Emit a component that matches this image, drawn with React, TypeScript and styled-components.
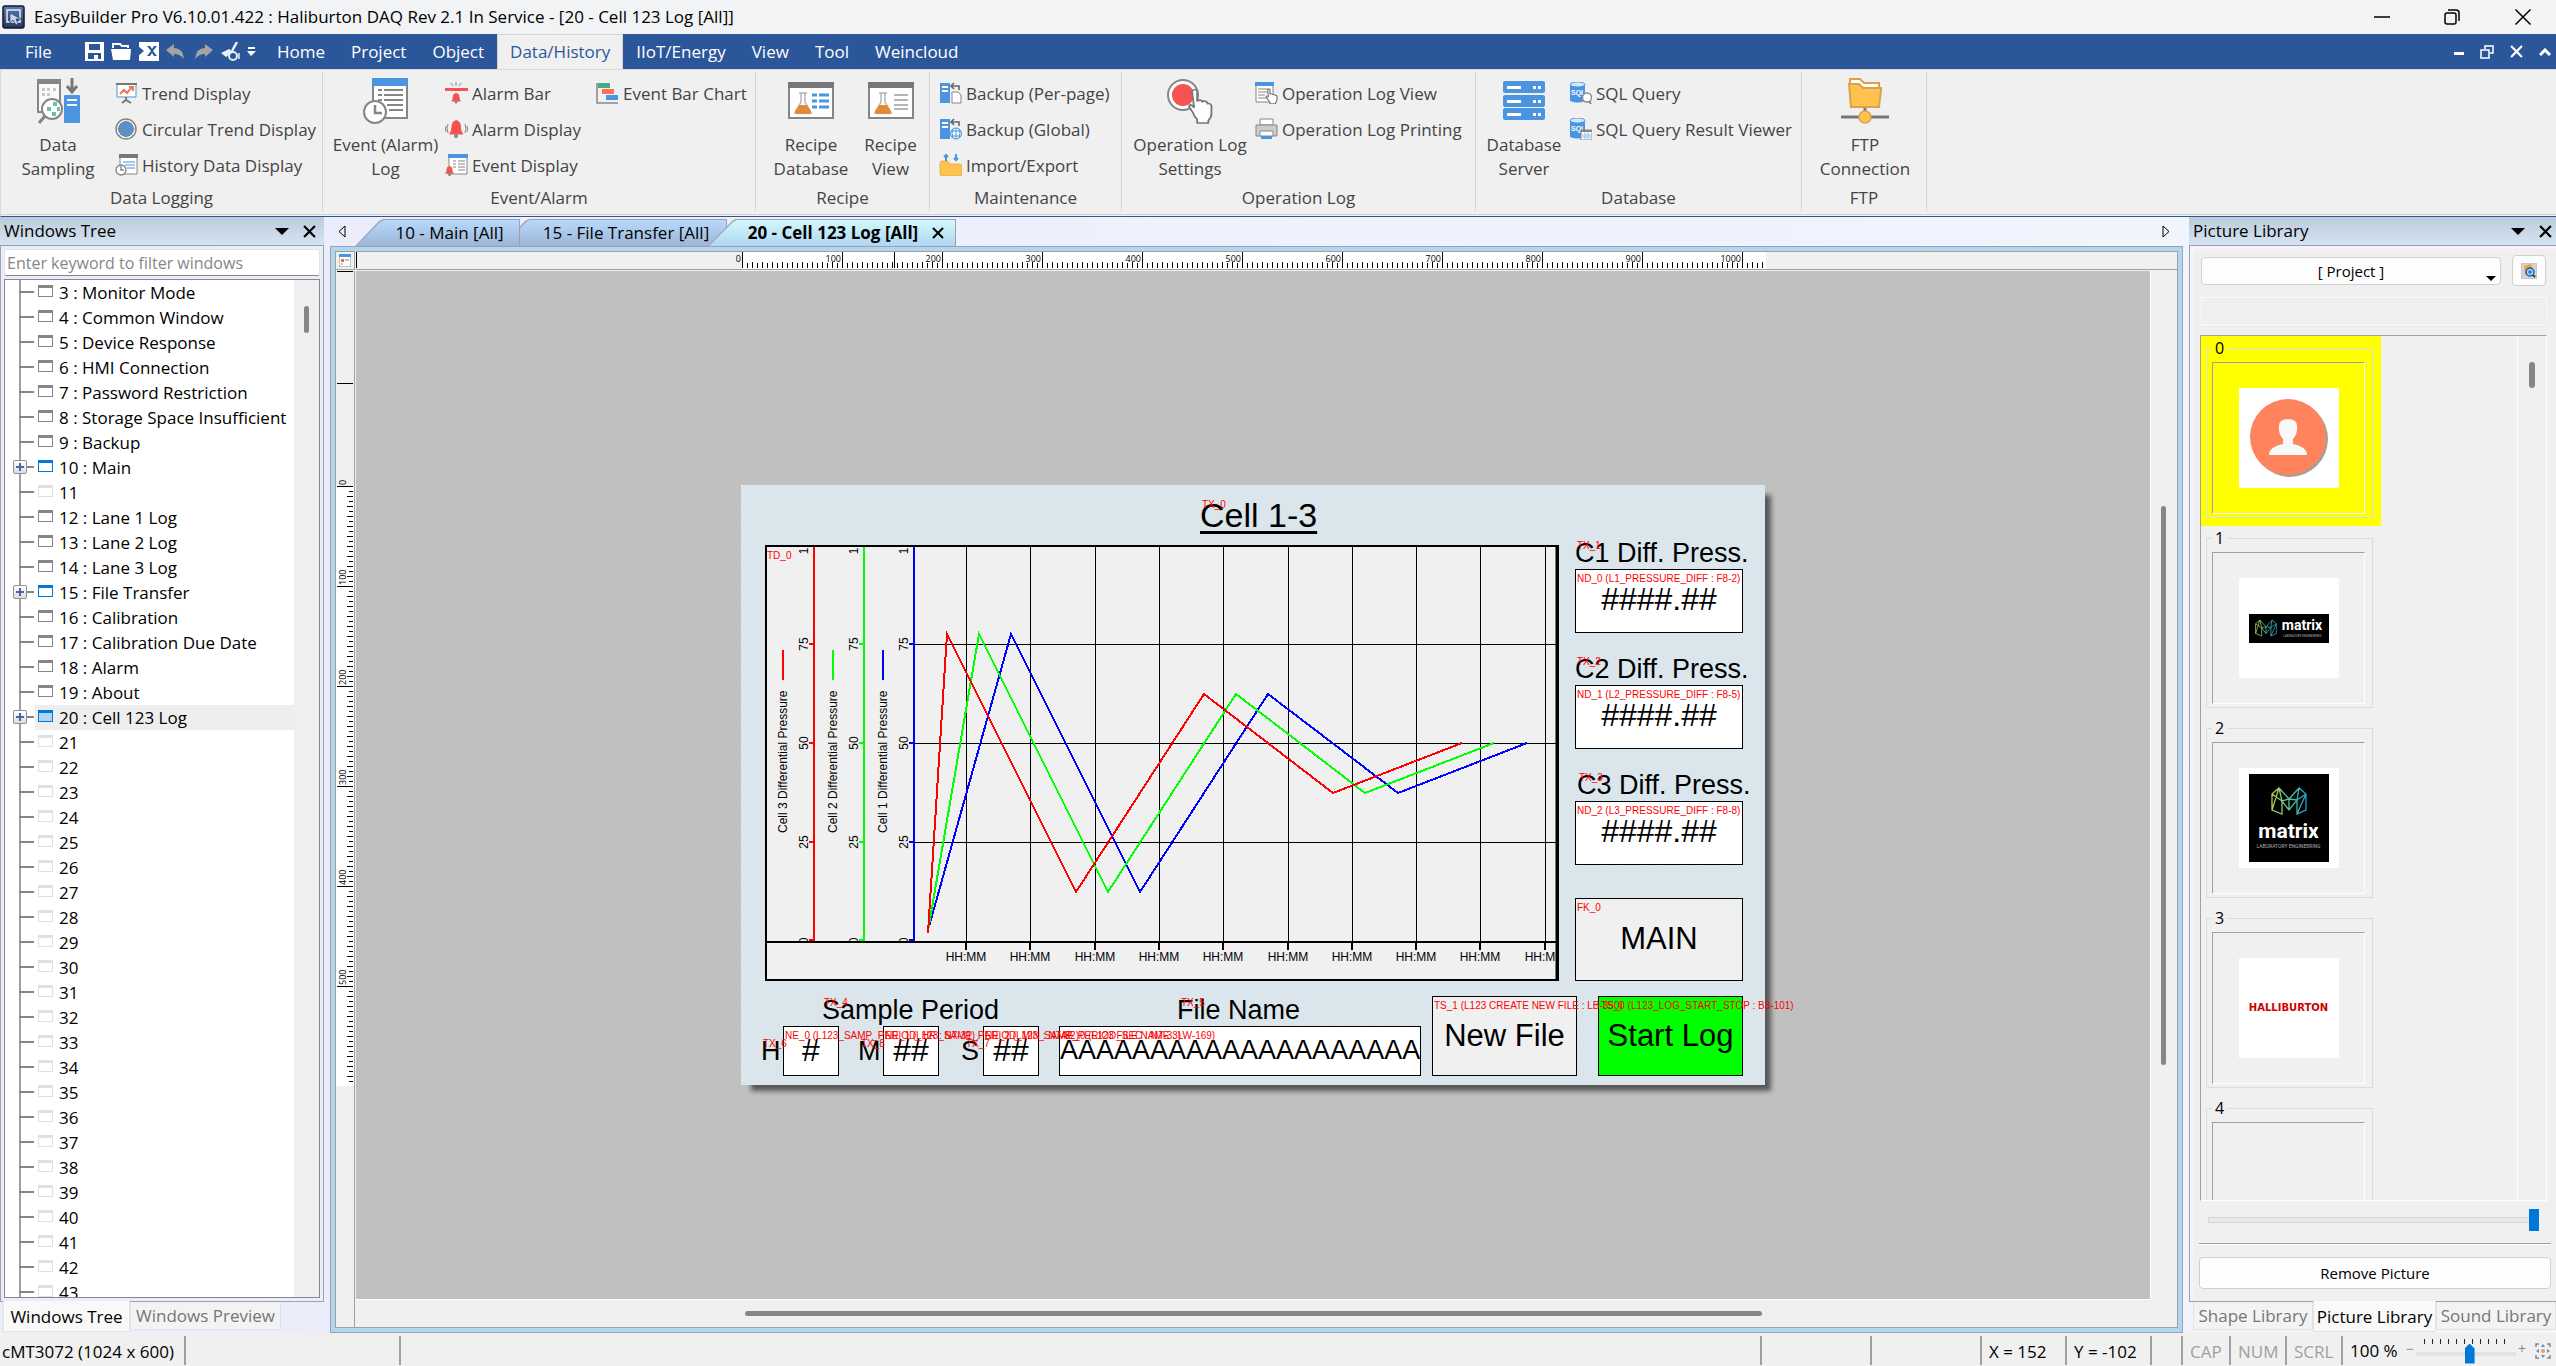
import React from "react";
import styled, { createGlobalStyle, css } from "styled-components";

const ui = `"Open Sans", "Noto Sans", sans-serif`;
const arial = `"Liberation Sans", Arial, sans-serif`;

const Global = createGlobalStyle`
  *, *::before, *::after { box-sizing: border-box; }
  body { margin: 0; background: #f0f0f0; font-family: ${ui}; font-size: 17px; color: #000; }
  button, input, select { font: inherit; color: inherit; margin: 0; padding: 0; border: 0; background: none; border-radius: 0; outline: 0; }
  button { cursor: default; white-space: nowrap; }
  ul { list-style: none; margin: 0; padding: 0; }
  svg { display: block; flex: none; }
`;

const Shell = styled.div`
  height: 100vh;
  display: flex;
  flex-direction: column;
  overflow: hidden;
`;

/* ---------- title bar ---------- */
const TitleBar = styled.header`
  height: 34px;
  flex: none;
  display: flex;
  align-items: center;
  gap: 9px;
  padding: 0 24px 0 2px;
  background: #f1f3f5;
`;
const TitleText = styled.h1`
  flex: 1;
  margin: 0;
  font-size: 17px;
  line-height: 24px;
  font-weight: 400;
`;
const WindowButtons = styled.div`
  display: flex;
  gap: 54px;
`;
const GlyphButton = styled.button`
  display: flex;
  align-items: center;
  justify-content: center;
`;

/* ---------- menu bar ---------- */
const MenuBar = styled.nav`
  height: 35px;
  flex: none;
  display: flex;
  background: #2b579a;
  color: #fff;
  padding-right: 5px;
`;
const MenuItem = styled.button<{ $active?: boolean }>`
  padding: 0 13px;
  line-height: 36px;
  font-size: 17px;
  color: #fff;
  &:first-child { padding: 0 33px 0 25px; }
  ${(p) =>
    p.$active &&
    css`
      background: #f0f0f0;
      color: #2b579a;
      border: 1px solid #d4d4d4;
      border-bottom: 0;
      padding: 0 12px;
      line-height: 34px;
    `}
`;
const QuickBar = styled.div`
  display: flex;
  align-items: center;
  gap: 7px;
  padding-right: 8px;
`;
const MenuSpacer = styled.div`
  flex: 1;
`;
const ChildButtons = styled.div`
  display: flex;
  align-items: center;
  gap: 16px;
`;

/* ---------- ribbon ---------- */
const Ribbon = styled.div`
  height: 148px;
  flex: none;
  display: flex;
  background: #f0f0f0;
  border-top: 1px solid #d9d9d9;
  border-left: 1px solid #d9d9d9;
  border-bottom: 1px solid #2b579a;
  padding: 2px 0 5px;
  color: #444;
  box-shadow: inset 0 -1px 0 #f0f0f0, inset 0 -2px 0 #d4d4d4;
`;
const Group = styled.section<{ $w: number }>`
  min-width: ${(p) => p.$w}px;
  display: flex;
  flex-direction: column;
  border-right: 1px solid #d4d4d4;
`;
const GroupBody = styled.div<{ $pad: number }>`
  flex: 1;
  display: flex;
  padding-left: ${(p) => p.$pad}px;
  align-items: flex-start;
`;
const GroupName = styled.div`
  text-align: center;
  font-size: 17px;
  line-height: 24px;
  padding-bottom: 1px;
`;
const BigButton = styled.button<{ $w: number }>`
  width: ${(p) => p.$w}px;
  display: flex;
  flex-direction: column;
  align-items: center;
  padding-top: 6px;
  font-size: 17px;
  line-height: 24px;
  white-space: pre-line;
  svg { margin-bottom: 9px; }
`;
const SmallColumn = styled.div<{ $w?: number }>`
  display: flex;
  flex-direction: column;
  width: ${(p) => (p.$w ? p.$w + "px" : "auto")};
  padding-top: 3px;
`;
const SmallButton = styled.button`
  height: 36px;
  display: flex;
  align-items: center;
  gap: 4px;
  font-size: 17px;
`;

/* ---------- workspace ---------- */
const Workspace = styled.main`
  flex: 1;
  min-height: 0;
  display: grid;
  grid-template-columns: 324px minmax(0, 1fr) 367px;
  background: linear-gradient(90deg, #ebecfb, #f2f6fe);
`;
const Dock = styled.aside`
  display: flex;
  flex-direction: column;
  min-height: 0;
`;
const DockHeader = styled.header<{ $end: number }>`
  height: 28px;
  flex: none;
  display: flex;
  align-items: center;
  gap: 14px;
  padding: 0 ${(p) => p.$end}px 0 4px;
  background: linear-gradient(#bccbd9, #d5e4f2);
  h2 { margin: 0; flex: 1; font-size: 17px; line-height: 28px; font-weight: 400; }
`;
const TreeBox = styled.div`
  flex: 1;
  min-height: 0;
  display: flex;
  flex-direction: column;
  border: 1px solid #a0a0a8;
  padding: 3px;
`;
const FilterInput = styled.input`
  && {
    height: 27px;
    flex: none;
    background: #fff;
    border: 1px solid #e4e4e4;
    border-bottom: 1px solid #868686;
    font-size: 16px;
    padding: 0 2px;
    border-radius: 2px;
  }
  &::placeholder { color: #868686; opacity: 1; }
`;
const TreeFrame = styled.div`
  margin-top: 3px;
  flex: 1;
  min-height: 0;
  display: flex;
  border: 1px solid #828790;
  background: #fff;
`;
const TreeList = styled.ul`
  flex: 1;
  overflow: hidden;
  background: linear-gradient(#a0a0a0, #a0a0a0) 14px 0 / 2px 100% no-repeat;
`;
const TreeRow = styled.li`
  height: 25px;
  display: grid;
  grid-template-columns: 30px 1fr;
  align-items: center;
`;
const Branch = styled.div`
  height: 25px;
  display: flex;
  align-items: center;
  justify-content: flex-end;
  padding-left: 8px;
  padding-bottom: 2px;
  &::after { content: ""; height: 2px; flex: 1; margin-right: 1px; background: #868686; }
`;
const BranchGap = styled.span`
  width: 6px;
`;
const Expander = styled.button`
  && {
    width: 14px;
    height: 14px;
    border: 1px solid #919191;
    border-radius: 2px;
    background:
      linear-gradient(#4b63a7, #4b63a7) center / 8px 2px no-repeat,
      linear-gradient(#4b63a7, #4b63a7) center / 2px 8px no-repeat,
      linear-gradient(#fff, #dcdcdc);
  }
`;
const TreeLabel = styled.div<{ $sel?: boolean }>`
  height: 25px;
  display: flex;
  align-items: center;
  gap: 6px;
  padding-left: 3px;
  white-space: nowrap;
  line-height: 25px;
  background: ${(p) => (p.$sel ? "#eeeeee" : "transparent")};
`;
const WinIcon = styled.span<{ $kind: "normal" | "open" | "empty" | "current" }>`
  width: 15px;
  height: 12px;
  margin-bottom: 3px;
  border: 1px solid;
  border-top-width: 3px;
  border-color: ${(p) => (p.$kind === "normal" ? "#868686" : p.$kind === "empty" ? "#e0e0e0" : "#0078d7")};
  background: ${(p) => (p.$kind === "current" ? "#b3d5f3" : "#fff")};
`;
const TreeScroll = styled.div`
  width: 25px;
  background: #f0f0f0;
  padding: 26px 0 0 10px;
  &::before { content: ""; display: block; width: 5px; height: 27px; border-radius: 3px; background: #868686; }
`;
const DockTabs = styled.div<{ $pad: number }>`
  height: 31px;
  flex: none;
  display: flex;
  align-items: flex-start;
  padding-left: ${(p) => p.$pad}px;
`;
const DockTab = styled.button<{ $active?: boolean; $w: number }>`
  && {
    width: ${(p) => p.$w}px;
    height: ${(p) => (p.$active ? 31 : 28)}px;
    margin-top: ${(p) => (p.$active ? -1 : 0)}px;
    padding-top: ${(p) => (p.$active ? 1 : 0)}px;
    border: 1px solid #e2e2e2;
    border-top: 0;
    background: ${(p) => (p.$active ? "#f9f9f9" : "#f3f3f3")};
    color: ${(p) => (p.$active ? "#000" : "#767676")};
  }
`;

/* ---------- document area ---------- */
const DocArea = styled.section`
  min-width: 0;
  min-height: 0;
  display: flex;
  flex-direction: column;
  padding: 0 6px;
`;
const DocStrip = styled.div`
  height: 29px;
  flex: none;
  display: flex;
  align-items: center;
  padding: 0 13px 0 8px;
`;
const DocTabs = styled.div`
  flex: 1;
  height: 29px;
  display: flex;
  align-items: flex-end;
  padding-left: 9px;
`;
const slant = "polygon(0 100%, 24px 2px, 28px 0, 100% 0, 100% 100%)";
const DocTab = styled.button<{ $w: number; $z: number; $active?: boolean }>`
  position: relative;
  z-index: ${(p) => p.$z};
  && {
    width: ${(p) => p.$w}px;
    height: 27px;
    padding-left: ${(p) => (p.$active ? 28 : 24)}px;
    line-height: 26px;
    font-weight: ${(p) => (p.$active ? 700 : 400)};
    background: #a0a0a8;
  }
  display: flex;
  align-items: center;
  justify-content: center;
  gap: 14px;
  clip-path: ${slant};
  &::before {
    content: "";
    position: absolute;
    z-index: -1;
    inset: 1px 1px 0 1px;
    clip-path: ${slant};
    background: ${(p) => (p.$active ? "linear-gradient(#d2f8fd, #b0d6f2)" : "linear-gradient(#b8d9fc, #9cb5d6)")};
  }
  & + & { margin-left: -19px; }
`;
const Frame = styled.div`
  flex: 1;
  min-height: 0;
  border: 1px solid #a0a0a8;
  background: #b0d6f2;
  padding: 4px;
  display: flex;
`;
const Editor = styled.div`
  flex: 1;
  min-width: 0;
  border: 1px solid #a0a0a0;
  border-top: 0;
  background: #f0f0f0;
  display: grid;
  grid-template-columns: 20px minmax(0, 1fr) 26px;
  grid-template-rows: 20px minmax(0, 1fr) 27px;
`;
const Corner = styled.div`
  border-top: 1px solid #a0a0a0;
  border-right: 1px solid #a0a0a0;
  border-bottom: 1px solid #a0a0a0;
  margin: 0 1px 1px 0;
  display: flex;
  align-items: center;
  justify-content: center;
`;
const TopRuler = styled.div`
  grid-column: 2 / 4;
  padding-right: 26px;
  display: flex;
  justify-content: center;
  border-top: 1px solid #a0a0a0;
  border-bottom: 1px solid #a0a0a0;
  margin-bottom: 1px;
  background: linear-gradient(#000, #000) 0 0 / 1px 16px no-repeat;
`;
const SideRuler = styled.div`
  border-right: 1px solid #a0a0a0;
  margin-right: 1px;
  display: flex;
  align-items: center;
  overflow: hidden;
  background:
    linear-gradient(#000, #000) 1px 0 / 16px 1px no-repeat,
    linear-gradient(#000, #000) 1px 112px / 16px 1px no-repeat;
`;
const Canvas = styled.div`
  background: #c0c0c0;
  border-right: 1px solid #fff;
  border-bottom: 1px solid #fff;
  display: flex;
  align-items: center;
  justify-content: center;
`;
const VScroll = styled.div`
  padding: 235px 0 0 10px;
  &::before { content: ""; display: block; width: 5px; height: 559px; border-radius: 3px; background: #868686; }
`;
const HScroll = styled.div`
  grid-column: 2 / 3;
  padding-top: 11px;
  display: flex;
  justify-content: center;
  &::before { content: ""; display: block; width: 1017px; height: 5px; border-radius: 3px; background: #868686; }
`;
const EditorGutter = styled.div`
  border-right: 1px solid #a0a0a0;
  margin-right: 1px;
`;

/* ---------- HMI page (free canvas) ---------- */
const Page = styled.div`
  position: relative;
  width: 1024px;
  height: 600px;
  flex: none;
  font-family: ${arial};
  background:
    linear-gradient(90deg, transparent 1px, #dbe6ec 1px) 0 0 / 20px 20px,
    linear-gradient(#f6f9fb 1px, #dbe6ec 1px) 0 0 / 20px 20px;
  box-shadow: 8px 8px 5px -2px rgba(0, 0, 0, 0.55);
`;
const at = css<{ $x: number; $y: number }>`
  position: absolute;
  left: ${(p) => p.$x}px;
  top: ${(p) => p.$y}px;
`;
const Caption = styled.div<{ $x: number; $y: number }>`
  ${at}
  font-size: 27px;
  line-height: 30px;
  white-space: nowrap;
`;
const Heading = styled.h2<{ $x: number; $y: number }>`
  ${at}
  margin: 0;
  font-size: 34px;
  line-height: 38px;
  font-weight: 400;
  text-decoration: underline;
  text-decoration-thickness: 3px;
  text-underline-offset: 4px;
  white-space: nowrap;
`;
const Tag = styled.span<{ $x: number; $y: number }>`
  ${at}
  z-index: 1;
  color: #f00;
  font-size: 10px;
  line-height: 12px;
  white-space: nowrap;
  pointer-events: none;
`;
const box = css<{ $x: number; $y: number; $w: number; $h: number }>`
  ${at}
  width: ${(p) => p.$w}px;
  height: ${(p) => p.$h}px;
  border: 1px solid #000;
`;
const Numeric = styled.output<{ $x: number; $y: number; $w: number; $h: number }>`
  ${box}
  background: #fff;
  display: flex;
  align-items: center;
  justify-content: center;
  font-size: 32px;
  padding-bottom: 3px;
`;
const Entry = styled.input<{ $x: number; $y: number; $w: number; $h: number; $size: number }>`
  && {
    ${box}
    background: #fff;
    text-align: center;
    font-family: ${arial};
    font-size: ${(p) => p.$size}px;
    padding-bottom: 2px;
  }
`;
const HmiButton = styled.button<{ $x: number; $y: number; $w: number; $h: number; $bg: string }>`
  && {
    ${box}
    background: ${(p) => p.$bg};
    font-family: ${arial};
    font-size: 31px;
    padding-bottom: 1px;
  }
`;
const Trend = styled.svg<{ $x: number; $y: number }>`
  ${at}
  font-family: ${arial};
  font-size: 12px;
`;

/* ---------- picture library ---------- */
const LibBody = styled.div`
  flex: 1;
  min-height: 0;
  display: flex;
  flex-direction: column;
  border: 1px solid #a0a0a8;
  border-right: 0;
  background: #f0f0f0;
  box-shadow: inset 3px 3px 0 #f4f5fc;
  padding: 9px 5px 12px 9px;
`;
const LibTop = styled.div`
  display: flex;
  align-items: center;
  gap: 11px;
  padding: 0 5px 0 2px;
`;
const ProjectWrap = styled.div`
  flex: 1;
  display: flex;
  position: relative;
  &::after {
    content: "";
    position: absolute;
    right: 5px;
    bottom: 4px;
    border: 5px solid transparent;
    border-top-color: #000;
    border-bottom: 0;
    pointer-events: none;
  }
`;
const ProjectSelect = styled.select`
  && {
    flex: 1;
    height: 28px;
    appearance: none;
    text-align: center;
    text-align-last: center;
    font-size: 15px;
    border: 1px solid #d0d0d0;
    border-radius: 4px;
    background: #fdfdfd;
  }
`;
const SearchButton = styled.button`
  && {
    width: 34px;
    height: 31px;
    border: 1px solid #d0d0d0;
    border-radius: 4px;
    background: #fdfdfd;
  }
  display: flex;
  align-items: center;
  justify-content: center;
`;
const EmptyBar = styled.div`
  height: 28px;
  flex: none;
  margin: 11px 4px 10px 2px;
  border: 1px solid #fafafa;
  outline: 1px solid #ececec;
  outline-offset: -2px;
`;
const PicScroll = styled.div`
  flex: 1;
  min-height: 0;
  margin: 0 4px 0 1px;
  display: flex;
  border: 1px solid #fff;
  border-top-color: #a0a0a0;
  border-left-color: #a0a0a0;
`;
const PicList = styled.ul`
  flex: 1;
  overflow: hidden;
  border-right: 1px solid #fff;
`;
const PicItem = styled.li<{ $sel?: boolean }>`
  width: 180px;
  height: 190px;
  padding: 0 8px 8px 5px;
  background: ${(p) => (p.$sel ? "#ff0" : "transparent")};
`;
const PicGroup = styled.fieldset`
  margin: 0;
  height: 182px;
  border: 1px solid #dcdcdc;
  padding: 2px 7px 3px 5px;
  min-width: 0;
  legend { padding: 0 3px; font-size: 16px; line-height: 24px; }
`;
const Sunken = styled.div`
  height: 152px;
  border: 1px solid #fff;
  border-top-color: #a0a0a0;
  border-left-color: #a0a0a0;
  display: flex;
  align-items: center;
  justify-content: center;
`;
const PicWhite = styled.div`
  width: 100px;
  height: 100px;
  background: #fff;
  display: flex;
  align-items: center;
  justify-content: center;
`;
const LogoPlate = styled.div<{ $tall?: boolean }>`
  width: 80px;
  height: ${(p) => (p.$tall ? 88 : 29)}px;
  background: #000;
  color: #fff;
  display: flex;
  flex-direction: ${(p) => (p.$tall ? "column" : "row")};
  align-items: center;
  justify-content: center;
  gap: ${(p) => (p.$tall ? 4 : 5)}px;
`;
const LogoWords = styled.div<{ $tall?: boolean }>`
  display: flex;
  flex-direction: column;
  align-items: center;
  font-family: Roboto, sans-serif;
  font-weight: 700;
  font-size: ${(p) => (p.$tall ? 21 : 14)}px;
  line-height: ${(p) => (p.$tall ? 24 : 15)}px;
  small { font-size: ${(p) => (p.$tall ? 5 : 3)}px; line-height: 6px; font-weight: 400; color: #b0b0b0; white-space: nowrap; }
`;
const RedLogo = styled.div`
  color: #c00;
  font-family: "DejaVu Sans", sans-serif;
  font-weight: 700;
  font-size: 10px;
  line-height: 12px;
`;
const PicScrollBar = styled.div`
  width: 28px;
  padding: 26px 0 0 11px;
  &::before { content: ""; display: block; width: 6px; height: 26px; border-radius: 3px; background: #868686; }
`;
const SizeSlider = styled.input`
  && {
    appearance: none;
    height: 22px;
    margin: 8px 12px 12px 9px;
    background:
      linear-gradient(#e7eaea, #e7eaea) 1px 9px / 328px 4px no-repeat,
      linear-gradient(#d6d6d6, #d6d6d6) 0 8px / 100% 6px no-repeat;
  }
  &::-webkit-slider-thumb { appearance: none; width: 10px; height: 22px; background: #0078d7; }
`;
const Divider = styled.hr`
  width: 100%;
  margin: 0 0 12px;
  border: 0;
  height: 2px;
  flex: none;
  border-top: 1px solid #a0a0a0;
  border-bottom: 1px solid #fff;
`;
const RemoveButton = styled.button`
  && {
    height: 32px;
    flex: none;
    border: 1px solid #d0d0d0;
    border-radius: 4px;
    background: #fdfdfd;
    font-size: 15px;
  }
`;

/* ---------- status bar ---------- */
const StatusBar = styled.footer`
  height: 33px;
  flex: none;
  display: flex;
  background: #f0f0f0;
  padding: 3px 0 1px;
`;
const StatusCell = styled.div<{ $w?: number; $dim?: boolean }>`
  ${(p) => (p.$w ? `width: ${p.$w}px; flex: none;` : "flex: 1;")}
  padding-left: 7px;
  line-height: 32px;
  white-space: nowrap;
  border-right: 2px solid #a0a0a0;
  color: ${(p) => (p.$dim ? "#a0a0a0" : "#000")};
  &:first-child { padding-left: 2px; }
`;
const ZoomArea = styled.div`
  flex: none;
  width: 213px;
  display: flex;
  align-items: center;
  gap: 2px;
  padding: 0 5px 0 7px;
  span { color: #868686; line-height: 20px; padding-bottom: 4px; font-size: 14px; }
  output { flex: 1; line-height: 30px; white-space: nowrap; }
  svg { margin-left: 7px; }
`;
const ZoomSlider = styled.input`
  && {
    appearance: none;
    width: 100px;
    height: 26px;
    background:
      repeating-linear-gradient(90deg, #222 0 1px, transparent 1px 8px) 8px 1px / 85px 5px no-repeat,
      linear-gradient(#dfe3e3, #dfe3e3) 0 14px / 100% 4px no-repeat;
  }
  &::-webkit-slider-thumb {
    appearance: none;
    width: 10px;
    height: 20px;
    margin-top: 6px;
    background: #0078d7;
    clip-path: polygon(0 5px, 50% 0, 100% 5px, 100% 100%, 0 100%);
  }
`;

/* ---------- icons ---------- */
const G = "#868686";
const B = "#4a94e0";
const R = "#f55252";
const Y = "#ffc24f";

const Cross = ({ s = 12, w = 2, c = "#000" }: { s?: number; w?: number; c?: string }) => (
  <svg width={s} height={s} viewBox="0 0 12 12"><path d="M1 1l10 10M11 1L1 11" stroke={c} strokeWidth={w} fill="none" /></svg>
);
const Down = () => (
  <svg width="14" height="7" viewBox="0 0 14 7"><path d="M0 0h14L7 7z" /></svg>
);
const AppIcon = () => (
  <svg width="23" height="24" viewBox="0 0 23 24">
    <defs><linearGradient id="ap" x1="0" y1="0" x2="0" y2="1"><stop offset="0" stopColor="#5c7cb4" /><stop offset="1" stopColor="#24365e" /></linearGradient></defs>
    <rect x="1" y="1" width="21" height="22" rx="2" fill="url(#ap)" stroke="#101828" strokeWidth="1.5" />
    <path d="M5 5h13v12H5z" fill="none" stroke="#e8eefa" strokeWidth="1.5" />
    <path d="M8 8v10l3-3 3 5 2-1-2-5h5z" fill="#c5d4ee" stroke="#33456d" strokeWidth=".7" />
  </svg>
);
const DataSampling = () => (
  <svg width="46" height="46" viewBox="0 0 46 46">
    <path d="M3 2h22v32H3z" fill="#fafafa" stroke={G} strokeWidth="2" /><path d="M2 1h24v5H2z" fill={G} />
    <g fill="#c9c9c9"><path d="M7 10h3v3H7zM12 10h3v3h-3zM18 10h3v3h-3zM7 15h3v3H7zM12 15h3v3h-3z" /></g>
    <path d="M10 38l-6 7" stroke={G} strokeWidth="3" /><circle cx="17" cy="31" r="10" fill="#fff" stroke={G} strokeWidth="2" />
    <path d="M12 29h4v4h-4zM18 24h4v4h-4zM17 34h4v4h-4zM22 29h3v4h-3z" fill="#6ec09f" />
    <path d="M37 0v12M32 8l5 6 5-6" stroke="#777" strokeWidth="3" fill="none" />
    <rect x="29" y="17" width="16" height="28" rx="1" fill={B} /><path d="M32 21h10v2H32zM32 26h10v2H32z" fill="#fff" />
  </svg>
);
const EventLog = () => (
  <svg width="46" height="46" viewBox="0 0 46 46">
    <path d="M10 2h34v38H10z" fill="#fff" stroke={G} strokeWidth="2" /><path d="M9 0h36v8H9z" fill={B} />
    <path d="M15 12h4M15 17h4M15 22h4M21 12h19M21 17h19M21 22h19M24 27h16M26 32h14" stroke={G} strokeWidth="2" />
    <circle cx="12" cy="34" r="11" fill="#fff" stroke={G} strokeWidth="2" /><path d="M12 27v8h7" stroke={G} strokeWidth="2.5" fill="none" />
  </svg>
);
const Recipe = ({ view }: { view?: boolean }) => (
  <svg width="46" height="46" viewBox="0 0 46 46">
    <path d="M1 5h44v35H1z" fill="#fff" stroke={G} strokeWidth="2" /><path d="M0 4h46v6H0z" fill="#777" />
    <path d="M11 15h8M13 15v9L7 35h16l-6-11v-9" stroke="#b5b5b5" strokeWidth="1.5" fill="none" />
    <path d="M11 27h8l4 6q1 3-2 3H9q-3 0-2-3z" fill="#e58938" />
    {view ? <path d="M26 17h14M26 22h14M26 27h14M26 31h14" stroke="#b5b5b5" strokeWidth="2" /> :
      <path d="M24 17h5M24 23h5M24 29h5M31 17h10M31 23h10M31 29h10" stroke={B} strokeWidth="3" />}
  </svg>
);
const Hand = ({ t, w = 1.8 }: { t: string; w?: number }) => (
  <path transform={t} d="M3 2q3-3 5 0v11q2-2 5 0v1q3-2 5 1v1q3-1 4 2v9q0 4-3 7v3H8v-4q-3-3-4-7l-4-7q1-4 5 1z" fill="#fff" stroke="#777" strokeWidth={w} strokeLinejoin="round" />
);
const OpSettings = () => (
  <svg width="46" height="46" viewBox="0 0 46 46">
    <circle cx="16" cy="17" r="15" fill="#fff" stroke={G} strokeWidth="2" /><circle cx="16" cy="17" r="11" fill={R} />
    <Hand t="translate(22 11) scale(1.02 .92)" />
  </svg>
);
const Server = () => (
  <svg width="46" height="46" viewBox="0 0 46 46">
    {[3, 17, 30].map((y) => (
      <g key={y}><rect x="2" y={y} width="42" height="12" rx="2" fill={B} /><path d={`M6 ${y + 5}h14v3H6zM32 ${y + 5}h3v3h-3zM37 ${y + 5}h3v3h-3z`} fill="#fff" /></g>
    ))}
  </svg>
);
const Ftp = () => (
  <svg width="48" height="46" viewBox="0 0 48 46">
    <path d="M0 39h48" stroke="#777" strokeWidth="3" /><path d="M24 28v8" stroke="#777" strokeWidth="3" />
    <path d="M9 6V1h10l4 4h15v7" fill="#fff" stroke="#dba24a" strokeWidth="2" />
    <path d="M8 6h10l4 4h18v2l-2 17H10z" fill={Y} stroke="#dba24a" strokeWidth="2" />
    <circle cx="24" cy="39" r="6" fill={Y} stroke="#dba24a" strokeWidth="1.5" />
  </svg>
);
const S = ({ children }: { children: React.ReactNode }) => (
  <svg width="23" height="22" viewBox="0 0 23 22">{children}</svg>
);
const bell = "M0 12q2-2 2-6 0-5 4-6 4 1 4 6 0 4 2 6z";
const TrendIc = () => <S><path d="M2 2h19v13H2z" fill="#fff" stroke={B} /><path d="M1 2h21" stroke="#777" strokeWidth="2" /><path d="M5 12l4-4 3 3 5-6M14 5h4v4" stroke="#f3735b" strokeWidth="2" fill="none" /><path d="M11 15v4M7 21l4-3 5 3" stroke="#777" strokeWidth="2" fill="none" /></S>;
const CircIc = () => <S><circle cx="11" cy="11" r="10" fill="#fff" stroke={G} strokeWidth="1.5" /><circle cx="11" cy="11" r="7.5" fill={B} stroke={G} /><path d="M11 1v20M1 11h20M4 4l14 14M18 4L4 18" stroke={G} strokeWidth=".7" /></S>;
const HistIc = () => <S><path d="M5 1h17v19H5z" fill="#fff" stroke={G} /><path d="M4 0h19v4H4z" fill="#777" /><path d="M8 8h12M10 11h10M12 14h8" stroke={B} /><circle cx="6" cy="16" r="5" fill="#fff" stroke={G} strokeWidth="1.4" /><path d="M6 12v4h3" stroke={G} fill="none" strokeWidth="1.4" /></S>;
const AlarmBarIc = () => <S><path d="M11 0v4M6 1l2 3M16 1l-2 3" stroke={G} /><path d="M0 6h23v3H0z" fill={R} /><path d={bell} transform="translate(6 11) scale(.85 .7)" fill={R} /><circle cx="11" cy="20" r="1.5" fill={G} /></S>;
const AlarmIc = () => <S><path d={bell} transform="translate(4 2) scale(1.2 1.2)" fill={R} /><circle cx="11" cy="18" r="2" fill={G} /><path d="M3 6q-2 4 0 9M20 6q2 4 0 9M1 8q-1 3 0 6M22 8q1 3 0 6" stroke={G} fill="none" /></S>;
const EventIc = () => <S><path d="M4 1h18v19H4z" fill="#fff" stroke={G} /><path d="M3 0h20v4H3z" fill={B} /><path d="M8 7h3M13 7h7M8 10h3M13 10h7M8 13h3M13 13h7M13 16h7" stroke={G} /><path d={bell} transform="translate(0 12) scale(.75 .65)" fill={R} /><circle cx="4.5" cy="20.5" r="1.5" fill={G} /></S>;
const BarIc = () => <S><path d="M1 1v20h21" stroke={G} strokeWidth="1.5" fill="none" /><path d="M2 1h12v5H2z" fill="#4aa986" /><path d="M6 7h12v5H6z" fill="#ff6f52" /><path d="M10 13h12v5H10z" fill={B} /></S>;
const BackBase = () => <><path d="M1 1h10v20H1z" fill={B} /><path d="M3 4h6v2H3zM3 8h6v2H3z" fill="#fff" /><path d="M13 4h7v4M15 1l-3 3 3 3" stroke="#666" strokeWidth="1.6" fill="none" /></>;
const BackPageIc = () => <S><BackBase /><path d="M13 10h6l3 3v8h-9z" fill="#fff" stroke={G} /></S>;
const BackGlobIc = () => <S><BackBase /><circle cx="17" cy="15.5" r="5.5" fill="#fff" stroke={B} /><path d="M12 13h10M12 18h10M17 10v11M14 11q-2 4 0 9M20 11q2 4 0 9" stroke={B} fill="none" /></S>;
const ImpIc = () => <S><path d="M1 9q0-2 2-2h6l2 3h10q2 0 2 2v8q0 2-2 2H3q-2 0-2-2z" fill={Y} stroke="#dba24a" strokeWidth=".7" /><path d="M7 7V1M5 3l2-2 2 2M17 0v6M15 4l2 2 2-2" stroke={B} strokeWidth="2" fill="none" /></S>;
const OpViewIc = () => <S><path d="M1 1h17v19H1z" fill="#fff" stroke={G} /><path d="M0 0h19v4H0z" fill={B} /><path d="M3 7h12M3 10h9M3 13h7M3 16h9" stroke={G} /><Hand t="translate(11 7) scale(.5 .4)" w={2.4} /></S>;
const PrintIc = () => <S><path d="M5 1h13v6H5z" fill="#fff" stroke={G} /><path d="M1 7h21v11H1z" fill="#ccc" stroke={G} /><path d="M5 13h13v5H5z" fill="#fff" stroke={G} /><path d="M6 18h11v3H6z" fill={B} /></S>;
const Cyl = () => <><path d="M1 2h15v17q-7 3-15 0z" fill={B} /><ellipse cx="8.5" cy="2.5" rx="7.5" ry="2.5" fill="#d5e8fb" stroke={B} /><text x="2" y="13" fontSize="7" fontWeight="700" fill="#fff" fontFamily="Liberation Sans, sans-serif">SQL</text></>;
const SqlIc = () => <S><Cyl /><circle cx="18" cy="15.5" r="4.5" fill="#fff" stroke={G} strokeWidth="1.3" /><path d="M20 19l2 3" stroke={G} strokeWidth="2" /></S>;
const SqlResIc = () => <S><Cyl /><path d="M12 12h11v10H12z" fill="#fff" stroke={G} /><path d="M12 12h11v2H12z" fill={G} /><path d="M13 17h9M13 19h9M16 14v7M19 14v7" stroke="#8fc0ef" /></S>;

const Matrix = ({ w, h }: { w: number; h: number }) => (
  <svg width={w} height={h} viewBox="0 0 36 28">
    <defs><linearGradient id="mx" gradientUnits="userSpaceOnUse" x1="0" y1="0" x2="36" y2="0"><stop offset="0" stopColor="#b9d14a" /><stop offset=".5" stopColor="#5cc09a" /><stop offset="1" stopColor="#1aa3cf" /></linearGradient></defs>
    <path d="M1 7L8 1l10 11L28 1l7 6v16l-9 4V13l-8 10-7-9v13l-10-4zM1 7l10 7L8 1M35 7l-9 6 2-12M1 23L8 1M18 12v11M11 14l7-2 8 1M26 27l9-20" fill="none" stroke="url(#mx)" strokeWidth="1.3" />
  </svg>
);
const UserPic = () => (
  <svg width="80" height="80" viewBox="0 0 80 80">
    <circle cx="41" cy="41" r="38" fill="#a8a098" /><circle cx="39" cy="39" r="38" fill="#ff835d" />
    <path d="M30 28q0-7 9-7t9 7q1 8-4 13v5q14 3 14 11H20q0-8 14-11v-5q-5-5-4-13z" fill="#f8f8f8" />
  </svg>
);

/* ---------- chart ---------- */
const gridX = [201, 265, 330, 394, 458, 523, 587, 651, 715, 780];
const series = [
  { c: "#00f", pts: "163,385 246,89 375,347 503,149 633,248 762,198" },
  { c: "#0f0", pts: "163,386 214,89 343,347 471,149 600,248 729,198" },
  { c: "#f00", pts: "163,388 182,89 311,347 439,149 568,248 697,198" },
];
const axes = [
  { x: 49, c: "#f00", name: "Cell 3 Differential Pressure" },
  { x: 99, c: "#0f0", name: "Cell 2 Differential Pressure" },
  { x: 149, c: "#00f", name: "Cell 1 Differential Pressure" },
];
const scaleMarks: [string, number][] = [["25", 297], ["50", 198], ["75", 99], ["0", 396], ["1", 6]];
const TrendChart = () => (
  <Trend $x={24} $y={60} width="794" height="436" viewBox="0 0 794 436">
    <clipPath id="plot"><rect x="0" y="0" width="794" height="396" /></clipPath>
    <clipPath id="inner"><rect x="0" y="0" width="791" height="436" /></clipPath>
    <rect x="1" y="1" width="792" height="434" fill="#f0f0f0" stroke="#000" strokeWidth="2" />
    <path d="M792 0v436" stroke="#000" strokeWidth="3" />
    <g shapeRendering="crispEdges" stroke="#000">
      {gridX.map((x) => <path key={x} d={`M${x}.5 2v394`} />)}
      {[99, 198, 297].map((y) => <path key={y} d={`M150 ${y}.5h641`} />)}
      <path d="M2 397h790" strokeWidth="2" />
      {gridX.map((x) => <path key={x} d={`M${x} 398v7`} strokeWidth="2" />)}
    </g>
    <g clipPath="url(#plot)">
      {axes.map((a) => (
        <g key={a.x}>
          <path d={`M${a.x} 2v394M${a.x - 5} 99h5M${a.x - 5} 198h5M${a.x - 5} 297h5M${a.x - 5} 395h5`} stroke={a.c} strokeWidth="2" shapeRendering="crispEdges" />
          <path d={`M${a.x - 31} 105v30`} stroke={a.c} strokeWidth="2" shapeRendering="crispEdges" />
          <text transform={`translate(${a.x - 27} 288) rotate(-90)`}>{a.name}</text>
          {scaleMarks.map(([t, y]) => (
            <text key={t} transform={`translate(${a.x - 6} ${y}) rotate(-90)`} textAnchor="middle">{t}</text>
          ))}
        </g>
      ))}
      {series.map((s) => <polyline key={s.c} points={s.pts} fill="none" stroke={s.c} strokeWidth="2" shapeRendering="crispEdges" />)}
    </g>
    <g clipPath="url(#inner)">{gridX.map((x) => <text key={x} x={x} y="416" textAnchor="middle">HH:MM</text>)}</g>
    <text x="2" y="14" fill="#f00" fontSize="10">TD_0</text>
  </Trend>
);

/* ---------- rulers ---------- */
const ticks = (n: number) => Array.from({ length: Math.ceil(n / 5) }, (_, i) => i * 5);
const TopScale = () => (
  <svg width="1024" height="17" viewBox="0 0 1024 17" overflow="visible" fontFamily={ui} fontSize="9" shapeRendering="crispEdges">
    <rect width="1024" height="17" fill="#fff" />
    {ticks(1024).map((t) => <path key={t} d={`M${t} ${t % 100 === 0 ? 0 : t % 10 ? 11 : 10}h1V16h-1z`} />)}
    <path d="M152 0h1v16h-1z" />
    {ticks(1024).filter((t) => t % 100 === 0).map((t) => <text key={t} x={t - 1} y="10" textAnchor="end">{t}</text>)}
  </svg>
);
const SideScale = () => (
  <svg width="18" height="600" viewBox="0 0 18 600" overflow="visible" fontFamily={ui} fontSize="9" shapeRendering="crispEdges">
    <rect width="18" height="600" fill="#fff" />
    {ticks(600).map((t) => <path key={t} d={`M${t % 100 === 0 ? 1 : t % 10 ? 13 : 11} ${t}H17v1H${t % 100 === 0 ? 1 : t % 10 ? 13 : 11}z`} />)}
    {ticks(600).filter((t) => t % 100 === 0).map((t) => <text key={t} transform={`translate(10 ${t - 1}) rotate(-90)`}>{t}</text>)}
  </svg>
);

/* ---------- data ---------- */
const names: Record<number, string> = {
  3: "Monitor Mode", 4: "Common Window", 5: "Device Response", 6: "HMI Connection", 7: "Password Restriction",
  8: "Storage Space Insufficient", 9: "Backup", 10: "Main", 12: "Lane 1 Log", 13: "Lane 2 Log", 14: "Lane 3 Log",
  15: "File Transfer", 16: "Calibration", 17: "Calibration Due Date", 18: "Alarm", 19: "About", 20: "Cell 123 Log",
};
const openWindows = [10, 15, 20];
const rows = Array.from({ length: 41 }, (_, i) => i + 3);
const kindOf = (n: number) => (n === 20 ? "current" : openWindows.includes(n) ? "open" : names[n] ? "normal" : "empty");
const menus = ["Home", "Project", "Object", "Data/History", "IIoT/Energy", "View", "Tool", "Weincloud"];

const Small = ({ icon, children }: { icon: React.ReactNode; children: string }) => (
  <SmallButton>{icon}{children}</SmallButton>
);

export default function App() {
  return (
    <Shell>
      <Global />
      <TitleBar>
        <AppIcon />
        <TitleText>EasyBuilder Pro V6.10.01.422 : Haliburton DAQ Rev 2.1 In Service - [20 - Cell 123 Log [All]]</TitleText>
        <WindowButtons>
          <GlyphButton aria-label="Minimize"><svg width="16" height="16" viewBox="0 0 16 16"><path d="M0 8h16" stroke="#000" strokeWidth="1.5" /></svg></GlyphButton>
          <GlyphButton aria-label="Restore"><svg width="16" height="16" viewBox="0 0 16 16" fill="none" stroke="#000" strokeWidth="1.5"><rect x="1" y="4" width="11" height="11" rx="2" /><path d="M4 1h8q3 0 3 3v8" /></svg></GlyphButton>
          <GlyphButton aria-label="Close"><Cross s={18} w={1} /></GlyphButton>
        </WindowButtons>
      </TitleBar>

      <MenuBar>
        <MenuItem>File</MenuItem>
        <QuickBar>
          <GlyphButton aria-label="Save"><svg width="19" height="19" viewBox="0 0 19 19"><path d="M0 0h19v19H0z" fill="#fff" /><path d="M4 2h11v6H4zM3 11h13v6h-3v-4H9v4H3z" fill="#2b579a" /></svg></GlyphButton>
          <GlyphButton aria-label="Open"><svg width="20" height="18" viewBox="0 0 20 18"><path d="M2 5V1h7l2 2h6v2" stroke="#fff" strokeWidth="2" fill="none" /><path d="M0 6h20l-1 11H2z" fill="#fff" /></svg></GlyphButton>
          <GlyphButton aria-label="Close file"><svg width="21" height="19" viewBox="0 0 21 19"><path d="M1 0h20v19H1z" fill="#fff" /><path d="M0 4l6 5-6 5zM9 4h3l2 3 2-3h3l-4 5 4 5h-3l-2-3-2 3H9l4-5z" fill="#2b579a" /></svg></GlyphButton>
          <GlyphButton aria-label="Undo"><svg width="20" height="16" viewBox="0 0 20 16"><path d="M0 6l8-6v4q9 0 10 11-4-5-10-5v3z" fill="#a4a4a4" /></svg></GlyphButton>
          <GlyphButton aria-label="Redo"><svg width="20" height="16" viewBox="0 0 20 16"><path d="M20 6l-8-6v4Q3 4 2 15q4-5 10-5v3z" fill="#a4a4a4" /></svg></GlyphButton>
          <GlyphButton aria-label="Clean"><svg width="20" height="20" viewBox="0 0 20 20"><path d="M17 0l-5 9" stroke="#e8eefa" strokeWidth="2.5" /><path d="M1 11l8-4 4 3-7 5z" fill="#e8eefa" /><circle cx="13" cy="14" r="4" fill="none" stroke="#e8eefa" strokeWidth="2" /><path d="M19 11v6" stroke="#e8eefa" strokeWidth="1.5" /></svg></GlyphButton>
          <GlyphButton aria-label="More"><svg width="9" height="9" viewBox="0 0 9 9" fill="#fff"><path d="M1 0h7v2H1zM0 4h9L4 9z" /></svg></GlyphButton>
        </QuickBar>
        {menus.map((m) => (
          <MenuItem key={m} $active={m === "Data/History"}>{m}</MenuItem>
        ))}
        <MenuSpacer />
        <ChildButtons>
          <GlyphButton aria-label="Minimize child"><svg width="10" height="12"><path d="M0 6h10v3H0z" fill="#fff" /></svg></GlyphButton>
          <GlyphButton aria-label="Restore child"><svg width="14" height="14" fill="none" stroke="#fff" strokeWidth="1.5"><path d="M5 4V1h8v7h-3M1 5h8v8H1z" /></svg></GlyphButton>
          <GlyphButton aria-label="Close child"><Cross s={13} w={2} c="#fff" /></GlyphButton>
          <GlyphButton aria-label="Collapse ribbon"><svg width="12" height="8"><path d="M1 7l5-5 5 5" stroke="#fff" strokeWidth="3" fill="none" /></svg></GlyphButton>
        </ChildButtons>
      </MenuBar>

      <Ribbon>
        <Group $w={322}>
          <GroupBody $pad={0}>
            <BigButton $w={114}><DataSampling />{"Data\nSampling"}</BigButton>
            <SmallColumn>
              <Small icon={<TrendIc />}>Trend Display</Small>
              <Small icon={<CircIc />}>Circular Trend Display</Small>
              <Small icon={<HistIc />}>History Data Display</Small>
            </SmallColumn>
          </GroupBody>
          <GroupName>Data Logging</GroupName>
        </Group>
        <Group $w={433}>
          <GroupBody $pad={3}>
            <BigButton $w={119}><EventLog />{"Event (Alarm)\nLog"}</BigButton>
            <SmallColumn $w={151}>
              <Small icon={<AlarmBarIc />}>Alarm Bar</Small>
              <Small icon={<AlarmIc />}>Alarm Display</Small>
              <Small icon={<EventIc />}>Event Display</Small>
            </SmallColumn>
            <SmallColumn><Small icon={<BarIc />}>Event Bar Chart</Small></SmallColumn>
          </GroupBody>
          <GroupName>Event/Alarm</GroupName>
        </Group>
        <Group $w={173}>
          <GroupBody $pad={14}>
            <BigButton $w={82}><Recipe />{"Recipe\nDatabase"}</BigButton>
            <BigButton $w={77}><Recipe view />{"Recipe\nView"}</BigButton>
          </GroupBody>
          <GroupName>Recipe</GroupName>
        </Group>
        <Group $w={192}>
          <GroupBody $pad={9}>
            <SmallColumn>
              <Small icon={<BackPageIc />}>Backup (Per-page)</Small>
              <Small icon={<BackGlobIc />}>Backup (Global)</Small>
              <Small icon={<ImpIc />}>Import/Export</Small>
            </SmallColumn>
          </GroupBody>
          <GroupName>Maintenance</GroupName>
        </Group>
        <Group $w={354}>
          <GroupBody $pad={3}>
            <BigButton $w={130}><OpSettings />{"Operation Log\nSettings"}</BigButton>
            <SmallColumn>
              <Small icon={<OpViewIc />}>Operation Log View</Small>
              <Small icon={<PrintIc />}>Operation Log Printing</Small>
            </SmallColumn>
          </GroupBody>
          <GroupName>Operation Log</GroupName>
        </Group>
        <Group $w={326}>
          <GroupBody $pad={3}>
            <BigButton $w={90}><Server />{"Database\nServer"}</BigButton>
            <SmallColumn>
              <Small icon={<SqlIc />}>SQL Query</Small>
              <Small icon={<SqlResIc />}>SQL Query Result Viewer</Small>
            </SmallColumn>
          </GroupBody>
          <GroupName>Database</GroupName>
        </Group>
        <Group $w={125}>
          <GroupBody $pad={6}><BigButton $w={114}><Ftp />{"FTP\nConnection"}</BigButton></GroupBody>
          <GroupName>FTP</GroupName>
        </Group>
      </Ribbon>

      <Workspace>
        <Dock>
          <DockHeader $end={8}>
            <h2>Windows Tree</h2>
            <GlyphButton aria-label="Menu"><Down /></GlyphButton>
            <GlyphButton aria-label="Close panel"><Cross s={13} /></GlyphButton>
          </DockHeader>
          <TreeBox>
            <FilterInput aria-label="Filter windows" placeholder="Enter keyword to filter windows" />
            <TreeFrame>
              <TreeList>
                {rows.map((n) => (
                  <TreeRow key={n}>
                    <Branch>{openWindows.includes(n) ? <Expander aria-label={`Expand ${n}`} /> : <BranchGap />}</Branch>
                    <TreeLabel $sel={n === 20}><WinIcon $kind={kindOf(n)} />{names[n] ? `${n} : ${names[n]}` : n}</TreeLabel>
                  </TreeRow>
                ))}
              </TreeList>
              <TreeScroll />
            </TreeFrame>
          </TreeBox>
          <DockTabs $pad={3}>
            <DockTab $active $w={127}>Windows Tree</DockTab>
            <DockTab $w={151}>Windows Preview</DockTab>
          </DockTabs>
        </Dock>

        <DocArea>
          <DocStrip>
            <GlyphButton aria-label="Scroll tabs left"><svg width="8" height="13"><path d="M7 1v11L1 6.5z" fill="none" stroke="#000" /></svg></GlyphButton>
            <DocTabs>
              <DocTab $w={165} $z={2}>10 - Main [All]</DocTab>
              <DocTab $w={226} $z={1}>15 - File Transfer [All]</DocTab>
              <DocTab $w={248} $z={3} $active>20 - Cell 123 Log [All]<Cross s={12} /></DocTab>
            </DocTabs>
            <GlyphButton aria-label="Scroll tabs right"><svg width="8" height="13"><path d="M1 1v11l6-5.5z" fill="none" stroke="#000" /></svg></GlyphButton>
          </DocStrip>
          <Frame>
            <Editor>
              <Corner><svg width="12" height="13" viewBox="0 0 12 13"><path d="M0 0h12v13H0z" fill="#fff" stroke={G} /><path d="M0 0h12v3H0z" fill={B} /><path d="M2 5h3v3H2z" fill="#f07030" /><path d="M6 6h4M3 9v2" stroke={G} /></svg></Corner>
              <TopRuler><TopScale /></TopRuler>
              <SideRuler><SideScale /></SideRuler>
              <Canvas>
                <Page>
                  <Heading $x={459} $y={11}>Cell 1-3</Heading>
                  <TrendChart />
                  {[1, 2, 3].map((n) => (
                    <React.Fragment key={n}>
                      <Caption $x={n === 3 ? 836 : 834} $y={53 + (n - 1) * 116}>C{n} Diff. Press.</Caption>
                      <Numeric $x={834} $y={84 + (n - 1) * 116} $w={168} $h={64}>####.##</Numeric>
                      <Tag $x={n === 3 ? 838 : 836} $y={55 + (n - 1) * 116}>TX_{n}</Tag>
                      <Tag $x={836} $y={88 + (n - 1) * 116}>ND_{n - 1} (L{n}_PRESSURE_DIFF : F8-{n * 3 - 1})</Tag>
                    </React.Fragment>
                  ))}
                  <HmiButton $x={834} $y={413} $w={168} $h={83} $bg="#f0f0f0">MAIN</HmiButton>
                  <HmiButton $x={691} $y={511} $w={145} $h={80} $bg="#f0f0f0">New File</HmiButton>
                  <HmiButton $x={857} $y={511} $w={145} $h={80} $bg="#00ff00">Start Log</HmiButton>
                  <Caption $x={81} $y={510}>Sample Period</Caption>
                  <Caption as="label" htmlFor="fname" $x={436} $y={510}>File Name</Caption>
                  <Caption as="label" htmlFor="hh" $x={20} $y={551}>H</Caption>
                  <Caption as="label" htmlFor="mm" $x={117} $y={551}>M</Caption>
                  <Caption as="label" htmlFor="ss" $x={220} $y={551}>S</Caption>
                  <Entry id="hh" readOnly value="#" $x={42} $y={541} $w={56} $h={50} $size={32} />
                  <Entry id="mm" readOnly value="##" $x={142} $y={541} $w={56} $h={50} $size={32} />
                  <Entry id="ss" readOnly value="##" $x={242} $y={541} $w={56} $h={50} $size={32} />
                  <Entry id="fname" readOnly value="AAAAAAAAAAAAAAAAAAAA" $x={318} $y={541} $w={362} $h={50} $size={27} />
                  <Tag $x={461} $y={14}>TX_0</Tag>
                  <Tag $x={836} $y={417}>FK_0</Tag>
                  <Tag $x={693} $y={515}>TS_1 (L123 CREATE NEW FILE : LB-350)</Tag>
                  <Tag $x={860} $y={515}>TS_0 (L123_LOG_START_STOP : B3-101)</Tag>
                  <Tag $x={83} $y={512}>TX_4</Tag>
                  <Tag $x={440} $y={512}>TX_5</Tag>
                  <Tag $x={22} $y={553}>TX_6</Tag>
                  <Tag $x={120} $y={553}>TX_8</Tag>
                  <Tag $x={225} $y={553}>TX_7</Tag>
                  <Tag $x={44} $y={545}>NE_0 (L123_SAMP_PERIOD_HR : N7-31)</Tag>
                  <Tag $x={144} $y={545}>NE_1 (L123_SAMP_PERIOD_MIN : N7-32)</Tag>
                  <Tag $x={244} $y={545}>NE_2 (L123_SAMP_PERIOD_SEC : N7-33)</Tag>
                  <Tag $x={320} $y={545}>AE_0 (L123 FILE NAME : LW-169)</Tag>
                </Page>
              </Canvas>
              <VScroll />
              <EditorGutter />
              <HScroll />
            </Editor>
          </Frame>
        </DocArea>

        <Dock>
          <DockHeader $end={4}>
            <h2>Picture Library</h2>
            <GlyphButton aria-label="Menu"><Down /></GlyphButton>
            <GlyphButton aria-label="Close panel"><Cross s={13} /></GlyphButton>
          </DockHeader>
          <LibBody>
            <LibTop>
              <ProjectWrap>
                <ProjectSelect aria-label="Library"><option>[ Project ]</option></ProjectSelect>
              </ProjectWrap>
              <SearchButton aria-label="Browse library">
                <svg width="16" height="16" viewBox="0 0 16 16"><path d="M0 0h16v16H0z" fill="#d4d4d4" stroke="#bbb" /><path d="M3 3l7-2 2 6-8 5z" fill="#f2a33f" /><path d="M11 11l3 3" stroke="#333" strokeWidth="2" /><circle cx="9" cy="9" r="4" fill="#9fd0f5" stroke="#1f5fae" strokeWidth="1.5" /><path d="M9 7v4M7 9h4" stroke="#1f5fae" /></svg>
              </SearchButton>
            </LibTop>
            <EmptyBar />
            <PicScroll>
              <PicList>
                {[0, 1, 2, 3, 4].map((n) => (
                  <PicItem key={n} $sel={n === 0}>
                    <PicGroup>
                      <legend>{n}</legend>
                      <Sunken>
                        {n < 4 && (
                          <PicWhite>
                            {n === 0 && <UserPic />}
                            {n === 1 && <LogoPlate><Matrix w={22} h={18} /><LogoWords>matrix<small>LABORATORY ENGINEERING</small></LogoWords></LogoPlate>}
                            {n === 2 && <LogoPlate $tall><Matrix w={36} h={28} /><LogoWords $tall>matrix<small>LABORATORY ENGINEERING</small></LogoWords></LogoPlate>}
                            {n === 3 && <RedLogo>HALLIBURTON</RedLogo>}
                          </PicWhite>
                        )}
                      </Sunken>
                    </PicGroup>
                  </PicItem>
                ))}
              </PicList>
              <PicScrollBar />
            </PicScroll>
            <SizeSlider type="range" aria-label="Picture size" defaultValue={100} />
            <Divider />
            <RemoveButton>Remove Picture</RemoveButton>
          </LibBody>
          <DockTabs $pad={4}>
            <DockTab $w={120}>Shape Library</DockTab>
            <DockTab $active $w={123}>Picture Library</DockTab>
            <DockTab $w={120}>Sound Library</DockTab>
          </DockTabs>
        </Dock>
      </Workspace>

      <StatusBar>
        <StatusCell $w={186}>cMT3072 (1024 x 600)</StatusCell>
        <StatusCell $w={215} />
        <StatusCell />
        <StatusCell $w={110} />
        <StatusCell $w={110} />
        <StatusCell $w={85}>X = 152</StatusCell>
        <StatusCell $w={85}>Y = -102</StatusCell>
        <StatusCell $w={31} />
        <StatusCell $w={48} $dim>CAP</StatusCell>
        <StatusCell $w={56} $dim>NUM</StatusCell>
        <StatusCell $w={56} $dim>SCRL</StatusCell>
        <ZoomArea>
          <output>100 %</output>
          <span>−</span>
          <ZoomSlider type="range" aria-label="Zoom" defaultValue={54} />
          <span>+</span>
          <svg width="16" height="16" viewBox="0 0 16 16"><path d="M1 4V1h3M12 1h3v3M15 12v3h-3M4 15H1v-3" stroke={G} fill="none" strokeWidth="1.5" /><path d="M8 1l2 3H6zM8 15l2-3H6zM1 8l3-2v4zM15 8l-3-2v4z" fill={B} /><circle cx="8" cy="8" r="2" fill="#f59a4c" /></svg>
        </ZoomArea>
      </StatusBar>
    </Shell>
  );
}
